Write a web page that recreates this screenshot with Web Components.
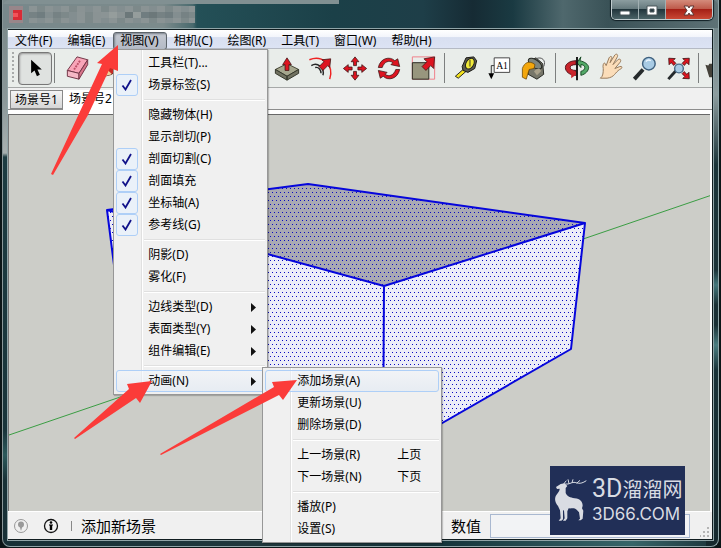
<!DOCTYPE html>
<html lang="zh-CN">
<head>
<meta charset="utf-8">
<title>SketchUp</title>
<style>
html, body { height: 100%; margin: 0; background: #0b1517; overflow: hidden; }
body { font: 12px/22px "Noto Sans", "Noto Sans CJK SC", sans-serif; color: #000; }
</style>
</head>
<body>
<app-window>
  <title-bar slot="title"></title-bar>
  <menu-bar>
    <menu-title>文件(F)</menu-title>
    <menu-title>编辑(E)</menu-title>
    <menu-title open>视图(V)
      <menu-popup slot="popup">
        <menu-item>工具栏(T)...</menu-item>
        <menu-item checked>场景标签(S)</menu-item>
        <menu-line></menu-line>
        <menu-item>隐藏物体(H)</menu-item>
        <menu-item>显示剖切(P)</menu-item>
        <menu-item checked>剖面切割(C)</menu-item>
        <menu-item checked>剖面填充</menu-item>
        <menu-item checked>坐标轴(A)</menu-item>
        <menu-item checked>参考线(G)</menu-item>
        <menu-line></menu-line>
        <menu-item>阴影(D)</menu-item>
        <menu-item>雾化(F)</menu-item>
        <menu-line></menu-line>
        <menu-item more>边线类型(D)</menu-item>
        <menu-item more>表面类型(Y)</menu-item>
        <menu-item more>组件编辑(E)</menu-item>
        <menu-line></menu-line>
        <menu-item more active>动画(N)
          <menu-popup slot="popup" sub>
            <menu-item active>添加场景(A)</menu-item>
            <menu-item>更新场景(U)</menu-item>
            <menu-item>删除场景(D)</menu-item>
            <menu-line></menu-line>
            <menu-item hint="上页">上一场景(R)</menu-item>
            <menu-item hint="下页">下一场景(N)</menu-item>
            <menu-line></menu-line>
            <menu-item>播放(P)</menu-item>
            <menu-item>设置(S)</menu-item>
          </menu-popup>
        </menu-item>
      </menu-popup>
    </menu-title>
    <menu-title>相机(C)</menu-title>
    <menu-title>绘图(R)</menu-title>
    <menu-title>工具(T)</menu-title>
    <menu-title>窗口(W)</menu-title>
    <menu-title>帮助(H)</menu-title>
  </menu-bar>
  <tool-bar></tool-bar>
  <scene-tabs></scene-tabs>
  <model-view></model-view>
  <status-bar></status-bar>
</app-window>
<guide-arrows></guide-arrows>
<brand-mark></brand-mark>

<script>
const define = (name, html, setup) => {
  const template = document.createElement('template');
  template.innerHTML = html;
  customElements.define(name, class extends HTMLElement {
    constructor() {
      super();
      this.attachShadow({ mode: 'open' }).append(template.content.cloneNode(true));
      if (setup) setup(this, this.shadowRoot);
    }
  });
};

define('app-window', `
<style>
:host { display: block; box-sizing: border-box; height: 100vh; padding: 0 2px 1px; }
.frame { box-sizing: border-box; height: 100%; display: flex; flex-direction: column; padding: 0 5px 6px;
  border: 1px solid #8fa5a8; border-top: 0; border-left-color: #8a9799; border-radius: 0 0 8px 8px;
  background:
    linear-gradient(#7c8b8c 0 28px, #8b9899 100px, #a8b0b0 153px, #1d3c42 157px, #19343a 430px, #2d5a5c 455px, #183137 480px) left / 12px 100% no-repeat,
    linear-gradient(#6b7f83 0, #8c9c9e 95px, #56696d 130px, #1b3439 165px, #1b3338 270px, #44777b 285px, #1a3035 305px, #1a3035 325px, #4b7d80 345px, #193238 370px, #16292e) right / 12px 100% no-repeat,
    linear-gradient(90deg, #183137, #20383d 35%, #143238 60%, #376569 88%, #1c343a); }
.client { flex: 1; min-height: 0; display: flex; flex-direction: column; border: 1px solid #101c1f; border-width: 1px 1px 1px 0; outline: 1px solid #91a5a8; background: #f0f0f0; }
</style>
<div class="frame"><slot name="title"></slot><div class="client"><slot></slot></div></div>`);

define('title-bar', `
<style>
:host { display: flex; justify-content: space-between; align-items: flex-start; height: 28px; flex: none; margin: 0 -5px 1px;
  border-radius: 6px 6px 0 0; background:
    linear-gradient(#819092, #819092) left top / 336px 4px no-repeat,
    linear-gradient(90deg, #78888b 0 10px, #7c8b8c 160px, #496a6e 190px, #245057 194px, #1b4048 330px, #1e3e48 420px, #162b34 470px, #1a3a42 510px, #4f686d 560px, #3a5257 605px, #5e7276 100%); }
svg { margin: 6px 0 0 6px; }
.buttons { display: flex; border: 1px solid #c1cccf; border-top: 0; border-radius: 0 0 5px 5px; margin-right: 5px; overflow: hidden; box-shadow: 0 0 1px 1px #101f24; }
button { border: 0; border-right: 1px solid #a1afb2; width: 27px; height: 19px; padding: 2px 0 0; display: grid; place-items: center;
  background: linear-gradient(#8c9da0, #64787c 48%, #21353c 50%, #4b6367); }
button:last-child { width: 46px; border-right: 0; background: linear-gradient(#d48b7b, #bd5848 48%, #a52016 50%, #c94834); }
button svg { margin: 0; }
</style>
<svg width="186" height="17" aria-hidden="true"></svg>
<div class="buttons">
<button aria-label="最小化"><svg width="14" height="12"><rect x="2" y="6" width="10" height="4" rx="1" fill="#fff" stroke="#4a565b"/></svg></button>
<button aria-label="最大化"><svg width="14" height="12"><path d="M2 1h10v9H2zM5 4v3h4V4z" fill="#fff" fill-rule="evenodd" stroke="#4a565b"/></svg></button>
<button aria-label="关闭"><svg width="14" height="12"><path d="M2 1h4l1 2 1-2h4L9 5.500l3 4.500H8L7 8l-1 2H2l3-4.500z" fill="#fff" stroke="#5c3633"/></svg></button>
</div>`, (host, root) => {
  const tones = ['#768284', '#8b9495', '#6c787a', '#838e90', '#8a9394', '#707d80', '#7d898a', '#959d9c'];
  let cells = '<rect width="14" height="17" fill="#98868a"/><rect x="4" y="4" width="9" height="10" fill="#d92b36"/><rect x="4" y="7" width="5" height="4" fill="#f2535a"/>';
  for (let x = 0; x < 21; x++)
    for (let y = 0; y < 3; y++)
      cells += `<rect x="${20 + x * 8}" y="${y * 6}" width="8" height="6" fill="${y === 1 ? tones[(x * 5 + (x >> 1)) % 8] : tones[[1, 3, 4, 6][(x * 3 + y) % 4]]}"/>`;
  root.querySelector('svg').innerHTML = cells;
});

define('menu-bar', `
<style>
:host { display: flex; flex: none; height: 18px; position: relative; z-index: 5; border-bottom: 1px solid #b5bac4;
  background: linear-gradient(#fff, #f3f5fb 38%, #d8dff0 42%, #dce3f4); }
</style><slot></slot>`);

define('menu-title', `
<style>
:host { display: block; position: relative; }
button { font: inherit; line-height: 16px; height: 18px; padding: 0 7px 0 6px; border: 1px solid transparent; background: none; color: inherit; white-space: nowrap; }
:host([open]) button { border-color: #5d646b; border-radius: 3px; background: linear-gradient(#c5c9d1, #b4bac6); box-shadow: inset 1px 1px 2px #7c838c; }
</style><button><slot></slot></button><slot name="popup"></slot>`);

define('menu-popup', `
<style>
:host { display: block; box-sizing: border-box; position: absolute; z-index: 10; top: calc(100% + 1px); left: 0; width: 155px; padding: 2px;
  border: 1px solid #979797; box-shadow: 1px 1px 1px #0003;
  background: linear-gradient(90deg, transparent 27px, #e0e0e0 27px 28px, #fff 28px 29px, transparent 29px) #f0f0f0; }
:host([sub]) { left: 100%; top: -3px; margin-left: -3px; width: 180px; }
</style><slot></slot>`);

define('menu-line', `
<style>
:host { display: block; height: 1px; margin: 3px 0 3px 28px; border-top: 1px solid #e0e0e0; background: #fff; }
</style>`);

define('menu-item', `
<style>
:host { display: block; position: relative; height: 22px; }
button { box-sizing: border-box; font: inherit; line-height: 20px; color: inherit; width: 100%; height: 22px; display: flex; align-items: center;
  padding: 0 10px 0 0; border: 1px solid transparent; border-radius: 3px; background: none; text-align: left; white-space: nowrap; }
:host([active]) button { border-color: #aecff7; background: linear-gradient(#f2f6fb88, #dfe9f588); }
.tick { box-sizing: border-box; flex: none; width: 22px; height: 22px; margin: 0 10px 0 -1px; display: grid; place-items: center; border: 1px solid transparent; border-radius: 3px; }
:host([checked]) .tick { border-color: #aecff7; background: #eaf1f9; }
.tick svg, .more { visibility: hidden; }
:host([checked]) .tick svg, :host([more]) .more { visibility: visible; }
.text { flex: 1; }
.hint { margin-right: 4px; }
.more { margin-right: -2px; }
</style>
<button role="menuitem"><span class="tick"><svg width="12" height="12"><path d="M1.500 6.500 4.500 10.500 10 1" fill="none" stroke="#11128a" stroke-width="1.800"/></svg></span>
<span class="text"><slot></slot></span><span class="hint"></span><svg class="more" width="5" height="9"><path d="M0 0 5 4.500 0 9z" fill="#111"/></svg></button><slot name="popup"></slot>`,
(host, root) => { root.querySelector('.hint').textContent = host.getAttribute('hint') || ''; });

const RED = 'fill="#dd1420" stroke="#3c1515" stroke-width=".8"';
const up = 'M0-12-4-7h2.500v4h3v-4H4z';
const icons = {
  select: '<path d="M-4-9V5l3.500-3L2 8l3-1.500L2.500 1H7z" fill="#000"/>',
  eraser: '<path d="M-1-12 10-9 1 5-11 2z" fill="#f9a5b8" stroke="#713545"/><path d="M-11 2 1 5v6l-12-3z" fill="#f5b8c5" stroke="#713545"/><path d="M1 5 10-9v5L1 11z" fill="#d77489" stroke="#713545"/><path d="M2-8-4 1" stroke="#bd5269" stroke-width="2" stroke-dasharray="2 1"/>',
  pencil: '<path d="M-8 8-5 1 6-10l5 5L0 6z" fill="#c62923" stroke="#541717"/><path d="m-8 8 3-7 5 5z" fill="#eed19b"/>',
  push: '<path d="M-12 1 0-5 12 1 0 8z" fill="#a5a68d" stroke="#424333"/><path d="M-12 1 0 8v4l-12-7zM12 1 0 8v4l12-7z" fill="#717261" stroke="#333629"/><path d="M0-11-4.500-4H-2v6h4v-6h2.500z" '+RED+'/>',
  follow: '<path d="M-12-9C0-14 14-5 9 11" fill="none" stroke="#e22" stroke-width="1.500"/><path d="M-10-3C-4-7 4-1 2 7M-6-1C-2-2 0 2 0 5" fill="none" stroke="#272727" stroke-width="1.500"/><path d="m10-10-9 1 2 2-5 5 4 4 5-5 2 2z" '+RED+'/>',
  move: [0,90,180,270].map(a=>`<path transform="rotate(${a})" d="${up}" ${RED}/>`).join(''),
  rotate: [0,180].map(a=>`<path transform="rotate(${a})" d="M-11-1C-9-11 1-13 6-8l3-2 2 8-9-2 2-2C0-9-5-7-7-1z" ${RED}/>`).join(''),
  scale: '<path d="M-11-12H12v23h-23z" fill="none" stroke="#f17e88"/><path d="M-11-6H6v17h-17z" fill="#98967e" stroke="#282820"/><path d="m12-12-11 2 3 3-5 5 4 4 5-5 3 3z" '+RED+'/>',
  tape: '<path d="m-11 8 8-7 3 2-8 7z" fill="#f3e21c" stroke="#222"/><path d="M-4-2 0-11 8-12l3 4-2 8-7 4-5-2z" fill="#5b5b50" stroke="#171713"/><ellipse cx="4" cy="-5" rx="4" ry="6" transform="rotate(30 4 -5)" fill="#f2eb39" stroke="#222"/><path d="M4-9v7" stroke="#8f8a2b" stroke-width="2"/>',
  text: '<path d="M-5-3h-4V8" fill="none" stroke="#333"/><path d="m-12 5 3 6 3-6z"/><path d="M-6-11h16V4H-6z" fill="#fff" stroke="#444"/><text x="-4" y="0" font-family="Liberation Serif,serif" font-size="10">A1</text>',
  paint: '<path d="m-4-8 6-3 7 6 1 11-7 5-9-5z" fill="#77776a" stroke="#252722"/><ellipse cx="1" cy="-5" rx="8" ry="4" transform="rotate(35 1 -5)" fill="#7f867d" stroke="#252722"/><path d="M-12 0C-10-6-5-9 1-4L0 0-5 1-8 11l-4-2z" fill="#f3a70d" stroke="#6d4907" stroke-width=".8"/><path d="M2-10c6-3 11 2 8 8" fill="none" stroke="#555"/><path d="M0 3c3-4 8-3 7 0l-4 4z" fill="#a9a18a"/>',
  orbit: '<path d="M-1-8C-7-8-12-5-12-1S-8 7-1 7V2C-5 2-7 1-7-1s2-3 6-3z" fill="#c8242b" stroke="#541319"/><path d="M3-8c5 1 9 4 9 7S9 6 4 7V3c3-1 4-2 4-4S6-4 4-4v3l-4-5 4-6z" fill="#52a967" stroke="#194a26"/><path d="m-6 1 7 4-7 5z" fill="#c8242b"/><path d="M0-12V12" stroke="#151515" stroke-width="2"/>',
  hand: '<path d="M-11 10C-8 8-8 4-8 0c-1-4 1-7 2-5l1 2 3-8c2-3 4-1 2 2l-1 3 5-8c2-2 4 0 2 3L2-4l5-5c3-2 4 1 2 3L4 0l5-2c3-1 3 2 0 3C4 4 4 9-4 10z" fill="#fbddb9" stroke="#96795a"/>',
  zoom: '<path d="m-2 1-9 10" stroke="#252a2c" stroke-width="4"/><circle cx="4" cy="-5" r="6.500" fill="#a8cbe4" stroke="#3f617f" stroke-width="1.500"/><path d="M1-7q2-3 5-1" stroke="#edf7ff" stroke-width="1.500" fill="none"/>',
  extents: '<path d="m-3 2-8 9" stroke="#252a2c" stroke-width="3"/><circle r="4.500" fill="#a8cbe4" stroke="#486b88" stroke-width="1.500"/>' + [45,135,315].map(a=>`<path transform="rotate(${a})" d="M0-15-4.500-10H-1.500v4h3v-4H4.500z" ${RED}/>`).join(''),
  walk: '<path d="m-13-4 3 1 1-2h3V9h-3z" fill="#45423a"/>'
};

define('tool-button', `
<style>
:host { display: block; flex: none; width: 34px; height: 33px; }
button { box-sizing: border-box; width: 100%; height: 100%; padding: 0; border: 1px solid transparent; border-radius: 4px; background: none; display: block; }
:host([pressed]) button { border-color: #777; background: #dfe2e0; box-shadow: inset 1px 1px 2px #999; }
svg { display: block; width: 100%; height: 100%; }
</style><button><svg viewBox="-16 -16 32 32"></svg></button>`, (host, root) => {
  const name = host.getAttribute('name');
  root.querySelector('svg').innerHTML = icons[name] || '';
  root.querySelector('button').setAttribute('aria-label', name);
});

define('tool-bar', `
<style>
:host { display: flex; align-items: center; flex: none; height: 38px; overflow: hidden; border-bottom: 1px solid #a6a9a8; background: #e9edea; }
.grip { flex: none; width: 2px; height: 32px; margin: 0 4px; background: repeating-linear-gradient(#a8abaa 0 2px, transparent 2px 4px); }
.line { flex: none; width: 1px; height: 30px; margin: 0 4px; background: #7c7f7e; }
.near { margin: 0 6px 0 2px; }
.draw { flex: none; width: 175px; display: flex; }
.last { margin: 0 2px 0 2px; }
</style>
<span class="grip"></span><tool-button name="select" pressed></tool-button><span class="line near"></span>
<tool-button name="eraser"></tool-button><div class="draw"><tool-button name="pencil"></tool-button></div>
<tool-button name="push"></tool-button><tool-button name="follow"></tool-button><tool-button name="move"></tool-button><tool-button name="rotate"></tool-button><tool-button name="scale"></tool-button>
<span class="line"></span><tool-button name="tape"></tool-button><tool-button name="text"></tool-button><tool-button name="paint"></tool-button>
<span class="line"></span><tool-button name="orbit"></tool-button><tool-button name="hand"></tool-button><tool-button name="zoom"></tool-button><tool-button name="extents"></tool-button>
<span class="line last"></span><tool-button name="walk"></tool-button>`);

define('scene-tabs', `
<style>
:host { display: flex; flex: none; height: 22px; padding: 2px 0 0 2px; border-bottom: 1px solid #8d8d8d; box-sizing: border-box; }
button { box-sizing: border-box; font: inherit; line-height: 18px; height: 19px; padding: 0 4px; border: 1px solid #888; background: linear-gradient(#f4f4f4, #d6d6d6); color: inherit; }
button[aria-selected=true] { height: 20px; border: 0; padding: 0 6px 2px; background: #fff; }
</style><button role="tab">场景号1</button><button role="tab" aria-selected="true">场景号2</button>`);

define('model-view', `
<style>
:host { display: block; flex: 1; min-height: 0; border: solid #fff; border-width: 4px 2px 1px 0; }
div { box-sizing: border-box; height: 100%; border-top: 1px solid #686868; border-left: 1px solid #777; background: #cccdc8; overflow: hidden; }
svg { display: block; width: 100%; height: 100%; }
</style>
<div><svg role="img" aria-label="模型">
<defs><pattern id="p" width="4" height="8" patternUnits="userSpaceOnUse"><path d="M0 0h1v1H0zM2 4h1v1H2z" fill="#0a0ac0" shape-rendering="crispEdges"/></pattern></defs>
<g transform="translate(-9 -115)">
<path d="M9 435 712 195" stroke="#3a9d43"/>
<path d="M107 210 384 286 383 457 121 320zM384 286 585 223 571 349 383 457z" fill="#ecedf8"/>
<path d="M107 210 308 184 585 223 384 286z" fill="#a9a9b3"/>
<path d="M107 210 308 184 585 223 571 349 383 457 121 320z" fill="url(#p)"/>
<path d="M384 286 107 210 308 184 585 223 384 286 383 457 571 349 585 223M383 457 121 320 107 210" fill="none" stroke="#0606dc" stroke-width="2" stroke-linejoin="round"/>
</g></svg></div>`);

define('status-bar', `
<style>
:host { display: flex; align-items: center; flex: none; height: 27px; font-size: 15px; padding: 0 2px 0 5px; }
svg { flex: none; }
.info { margin-left: 14px; }
.line { width: 1px; height: 10px; margin: 0 9px 0 12px; background: #888; }
label { margin-left: auto; }
input { box-sizing: border-box; width: 200px; height: 24px; margin: 0 10px 0 9px; border: 1px solid #a9b8d0; background: #f2f3f5; font: inherit; }
.size { align-self: flex-end; margin-bottom: 2px; }
</style>
<svg width="16" height="16"><circle cx="8" cy="8" r="6.500" fill="none" stroke="#999"/><circle cx="8" cy="6.500" r="3" fill="#999"/><path d="M6.500 8h3L8 13z" fill="#999"/></svg>
<svg class="info" width="16" height="16"><circle cx="8" cy="8" r="6.500" fill="none" stroke="#111" stroke-width="1.300"/><circle cx="8" cy="4.500" r="1.300"/><path d="M6 6.500h4v1H9.200V12H6.800V7.500H6z"/></svg>
<span class="line"></span><span>添加新场景</span><label for="v">数值</label><input id="v">
<svg class="size" width="10" height="10" fill="#b5b5b5"><path d="M7 0h2v2H7zM7 4h2v2H7zM7 8h2v2H7zM3 4h2v2H3zM3 8h2v2H3zM0 8h1v2H0z"/></svg>`);

define('guide-arrows', `
<style>
:host { display: block; position: absolute; inset: 0; z-index: 20; pointer-events: none; }
svg { display: block; width: 100%; height: 100%; }
</style>
<svg aria-hidden="true" fill="#fb3b39">
<path d="M118 45 97 63l5 1L51 174l2 1 35-60 22-47 8 3z"/>
<path d="m152 381-25 3 2 5-55 49 1 1 61-41 4 5z"/>
<path d="m297 380-25 2 2 5-114 67 1 1 118-60 4 5z"/>
</svg>`);

define('brand-mark', `
<style>
:host { display: flex; box-sizing: border-box; position: absolute; z-index: 21; right: 36px; bottom: 13px; width: 135px; height: 69px; padding: 0 0 0 4px; background: #212f57; color: #d9dce3; }
svg { flex: none; margin-top: 12px; }
.words { margin: 8px 0 0 2px; }
.cn { display: flex; align-items: center; font: 20px/30px "Noto Sans CJK SC", sans-serif; }
.cn b { font: 25px/30px Roboto, sans-serif; }
.en { font: 17px/20px Inter, sans-serif; }
</style>
<svg width="36" height="44" viewBox="0 0 108 132"><g fill="#d9dce3">
<path d="M6 27 20 18 32 16 40 24 35 30 35 45C40 56 48 58 62 61 79 62 86 72 86 83L84 91 88 98 86 122 80 127H73L78 122 75 103 68 95C60 88 54 92 44 91L40 100V121L35 128H27L32 121 30 98 27 96 27 124 22 128H14L20 121 18 97 12 84C4 74 2 66 4 58 7 46 17 43 17 32L9 33z"/></g>
<path d="M29 18 37 8M34 18C46 20 51 13 60 13S76 22 97 8M45 17 42 4M54 14 57 4M68 16 78 7" fill="none" stroke="#d9dce3" stroke-width="3"/></svg>
<div class="words"><div class="cn"><b>3D</b>溜溜网</div><div class="en">3D66.COM</div></div>`);
</script>
</body>
</html>
